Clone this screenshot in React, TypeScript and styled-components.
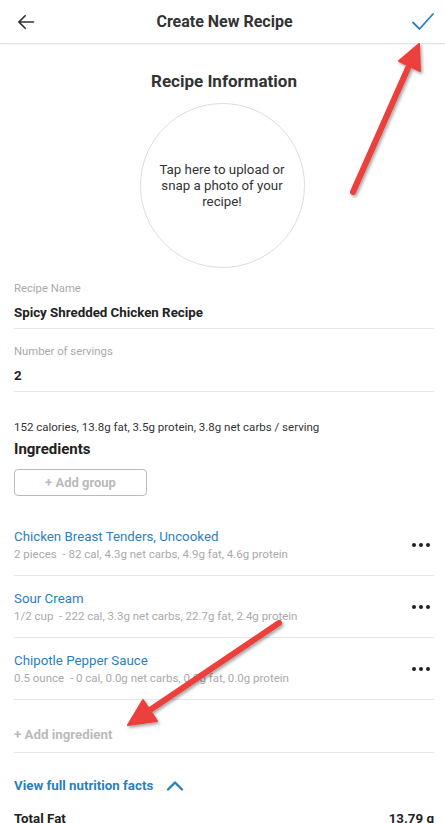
import React from 'react'
import styled, { createGlobalStyle } from 'styled-components'

const GlobalStyle = createGlobalStyle`
  html, body { margin: 0; padding: 0; background: #fff; }
  body { font-family: Roboto, "Noto Sans", Arial, sans-serif; color: #222; overflow: hidden; }
  * { box-sizing: border-box; }
`

type Ingredient = { name: string; detail: string }

const ingredients: Ingredient[] = [
  { name: 'Chicken Breast Tenders, Uncooked', detail: '2 pieces  - 82 cal, 4.3g net carbs, 4.9g fat, 4.6g protein' },
  { name: 'Sour Cream', detail: '1/2 cup  - 222 cal, 3.3g net carbs, 22.7g fat, 2.4g protein' },
  { name: 'Chipotle Pepper Sauce', detail: '0.5 ounce  - 0 cal, 0.0g net carbs, 0.0g fat, 0.0g protein' },
]

const App = () => {
  return (
    <Page>
      <GlobalStyle />
      <Header>
        <IconButton aria-label="back">
          <svg width="20" height="20" viewBox="0 0 24 24" fill="none" stroke="#333" strokeWidth="2" strokeLinecap="round">
            <path d="M21 12H4M11 4.5L3.5 12 11 19.5" />
          </svg>
        </IconButton>
        <Title>Create New Recipe</Title>
        <IconButton aria-label="save">
          <svg width="24" height="20" viewBox="0 0 24 20" fill="none" stroke="#2a7fc1" strokeWidth="1.8" strokeLinecap="round">
            <path d="M2 10.5L8.5 17 22 2" />
          </svg>
        </IconButton>
      </Header>

      <Body>
        <SectionTitle>Recipe Information</SectionTitle>
        <PhotoCircle>Tap here to upload or snap a photo of your recipe!</PhotoCircle>

        <Field $gap={14}>
          <FieldLabel>Recipe Name</FieldLabel>
          <FieldValue>Spicy Shredded Chicken Recipe</FieldValue>
        </Field>
        <Field $gap={16}>
          <FieldLabel>Number of servings</FieldLabel>
          <FieldValue>2</FieldValue>
        </Field>

        <Summary>152 calories, 13.8g fat, 3.5g protein, 3.8g net carbs / serving</Summary>
        <Subheading>Ingredients</Subheading>
        <GroupButton>+ Add group</GroupButton>

        <List>
          {ingredients.map((item) => (
            <Row key={item.name}>
              <RowText>
                <RowName>{item.name}</RowName>
                <RowDetail>{item.detail}</RowDetail>
              </RowText>
              <Dots>
                <span />
                <span />
                <span />
              </Dots>
            </Row>
          ))}
          <AddRow>+ Add ingredient</AddRow>
        </List>

        <NutritionToggle>
          View full nutrition facts
          <svg width="18" height="12" viewBox="0 0 18 12" fill="none" stroke="#2a7fc1" strokeWidth="2.4" strokeLinecap="round" strokeLinejoin="round">
            <path d="M2 9.5L9 2.5 16 9.5" />
          </svg>
        </NutritionToggle>
        <FactRow>
          <span>Total Fat</span>
          <span>13.79 g</span>
        </FactRow>
      </Body>

      {/* annotation arrows drawn over the screenshot */}
      <Arrows width="445" height="823" viewBox="0 0 445 823">
        <defs>
          <filter id="sh" x="-20%" y="-20%" width="140%" height="140%">
            <feDropShadow dx="1.5" dy="2" stdDeviation="1.5" floodColor="#000" floodOpacity="0.35" />
          </filter>
        </defs>
        <g filter="url(#sh)" fill="#ec3f3c" stroke="#ec3f3c" strokeLinecap="round">
          <line x1="353" y1="192" x2="408" y2="68" strokeWidth="6" />
          <polygon points="419,44 420,71 399,61" strokeWidth="2" strokeLinejoin="round" />
          <line x1="279" y1="623" x2="150" y2="710" strokeWidth="6" />
          <polygon points="128,725 143,700 157,721" strokeWidth="2" strokeLinejoin="round" />
        </g>
      </Arrows>
    </Page>
  )
}

export default App

const Page = styled('div')`
  position: relative;
  width: 445px;
  height: 823px;
  overflow: hidden;
  background: #fff;
`

const Header = styled('header')`
  height: 44px;
  display: flex;
  align-items: center;
  justify-content: space-between;
  padding: 0 8px 0 12px;
  border-bottom: 1.5px solid #e4e4e4;
  box-shadow: 0 1px 2px rgba(0, 0, 0, 0.05);
`

const IconButton = styled('button')`
  display: flex;
  align-items: center;
  justify-content: center;
  width: 28px;
  height: 28px;
  padding: 0;
  border: 0;
  background: none;
`

const Title = styled('h1')`
  margin: 0;
  font-size: 16px;
  font-weight: 700;
  color: #333;
`

const Body = styled('main')`
  padding: 0 11px 0 14px;
  display: flex;
  flex-direction: column;
`

const SectionTitle = styled('h2')`
  margin: 27px 0 0;
  text-align: center;
  font-size: 17px;
  font-weight: 700;
  color: #333;
  line-height: 20px;
`

const PhotoCircle = styled('div')`
  align-self: center;
  margin: 12px 0 0 -4px;
  width: 165px;
  height: 165px;
  border-radius: 50%;
  border: 1px solid #ddd;
  display: flex;
  align-items: center;
  justify-content: center;
  padding: 1px 18px 0;
  text-align: center;
  font-size: 13.3px;
  line-height: 16px;
  color: #333;
`

const Field = styled('div')<{ $gap: number }>`
  display: flex;
  flex-direction: column;
  margin-top: ${({ $gap }) => $gap}px;
  padding-bottom: 7px;
  border-bottom: 1px solid #e6e6e6;
`

const FieldLabel = styled('div')`
  font-size: 11.3px;
  color: #aaa;
  line-height: 14px;
`

const FieldValue = styled('div')`
  margin-top: 9px;
  font-size: 13.3px;
  font-weight: 700;
  color: #222;
  line-height: 16px;
`

const Summary = styled('div')`
  margin-top: 28px;
  font-size: 11.5px;
  color: #333;
  line-height: 14px;
`

const Subheading = styled('h3')`
  margin: 6px 0 0;
  font-size: 15px;
  font-weight: 700;
  color: #222;
  line-height: 18px;
`

const GroupButton = styled('button')`
  align-self: flex-start;
  margin-top: 11px;
  width: 133px;
  height: 27px;
  border: 1px solid #bbb;
  border-radius: 4px;
  background: #fff;
  font-family: inherit;
  font-size: 13px;
  font-weight: 700;
  color: #bbb;
`

const List = styled('div')`
  margin-top: 18px;
  display: flex;
  flex-direction: column;
`

const Row = styled('div')`
  display: flex;
  align-items: center;
  height: 62px;
  border-bottom: 1px solid #e6e6e6;
`

const RowText = styled('div')`
  flex: 1;
  display: flex;
  flex-direction: column;
  gap: 2px;
`

const RowName = styled('div')`
  font-size: 13.3px;
  color: #2a7fc1;
  line-height: 16px;
`

const RowDetail = styled('div')`
  font-size: 11.5px;
  color: #aaa;
  line-height: 14px;
  white-space: pre;
`

const Dots = styled('div')`
  display: flex;
  gap: 3px;
  margin-right: 4px;
  span {
    width: 4px;
    height: 4px;
    border-radius: 50%;
    background: #222;
  }
`

const AddRow = styled('div')`
  height: 53px;
  display: flex;
  align-items: center;
  padding-top: 16px;
  border-bottom: 1px solid #e6e6e6;
  font-size: 13.3px;
  font-weight: 700;
  color: #bbb;
`

const NutritionToggle = styled('div')`
  margin-top: 25px;
  display: flex;
  align-items: center;
  gap: 13px;
  font-size: 13.3px;
  font-weight: 700;
  color: #2a7fc1;
  line-height: 16px;
`

const FactRow = styled('div')`
  margin-top: 17px;
  display: flex;
  justify-content: space-between;
  font-size: 13.3px;
  font-weight: 700;
  color: #222;
`

const Arrows = styled('svg')`
  position: absolute;
  left: 0;
  top: 0;
  pointer-events: none;
`
